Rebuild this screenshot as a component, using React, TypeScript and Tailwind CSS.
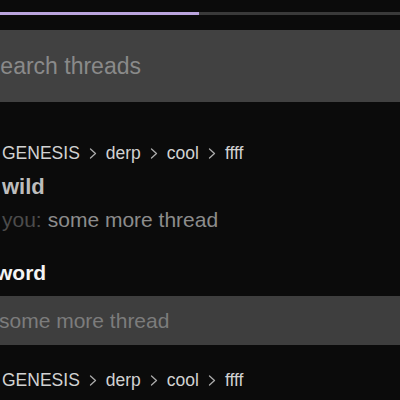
// Thread search panel (dark)

const CRUMBS = ["GENESIS", "derp", "cool", "ffff"]

function Chevron() {
  return (
    <svg width="8" height="13" viewBox="0 0 8 13" className="shrink-0">
      <polyline points="1.5,2 6.5,6.5 1.5,11" fill="none" stroke="#ababab" strokeWidth="1.3" strokeLinecap="round" strokeLinejoin="round" />
    </svg>
  )
}

function Breadcrumb({ className = "" }: { className?: string }) {
  return (
    <div className={`flex items-center gap-[9px] h-[24px] pl-[22px] text-[17.5px] text-[#d2d2d2] ${className}`}>
      {CRUMBS.map((c, i) => (
        <span key={c} className="flex items-center gap-[9px]">
          {i > 0 && <Chevron />}
          <span>{c}</span>
        </span>
      ))}
    </div>
  )
}

export default function App() {
  return (
    <div
      className="w-[400px] h-[400px] overflow-hidden bg-[#0b0b0b]"
      style={{ fontFamily: '"Liberation Sans", Arial, sans-serif' }}
    >
      <div className="-ml-[20px] w-[420px]">
        {/* progress */}
        <div className="pt-[12px]">
          <div className="h-[3px] bg-[#3a3a3a]">
            <div className="h-full w-[219px] bg-[#bba5de]" />
          </div>
        </div>

        {/* search */}
        <div className="mt-[15px] h-[72px] bg-[#414141] flex items-center pl-[5px]">
          <span className="text-[23px] text-[#8a8a8a]">Search threads</span>
        </div>

        {/* thread 1 */}
        <Breadcrumb className="mt-[39px]" />
        <div className="mt-[7px] h-[29px] flex items-center pl-[22px] text-[22px] font-bold text-[#bdbdbd]">wild</div>
        <div className="mt-[5px] h-[28px] flex items-center pl-[22px] text-[21px]">
          <span className="text-[#4c4c4c]">you:</span>
          <span className="ml-[6px] text-[#8c8c8c]">some more thread</span>
        </div>

        {/* thread 2 */}
        <div className="mt-[25px] h-[28px] flex items-center pl-[16px] text-[21px] font-bold text-[#f4f4f4]">word</div>
        <div className="mt-[9px] h-[49px] bg-[#3e3e3e] flex items-center pl-[19px] text-[21px] text-[#7c7c7c]">
          some more thread
        </div>

        {/* thread 3 */}
        <Breadcrumb className="mt-[23px]" />
      </div>
    </div>
  )
}
